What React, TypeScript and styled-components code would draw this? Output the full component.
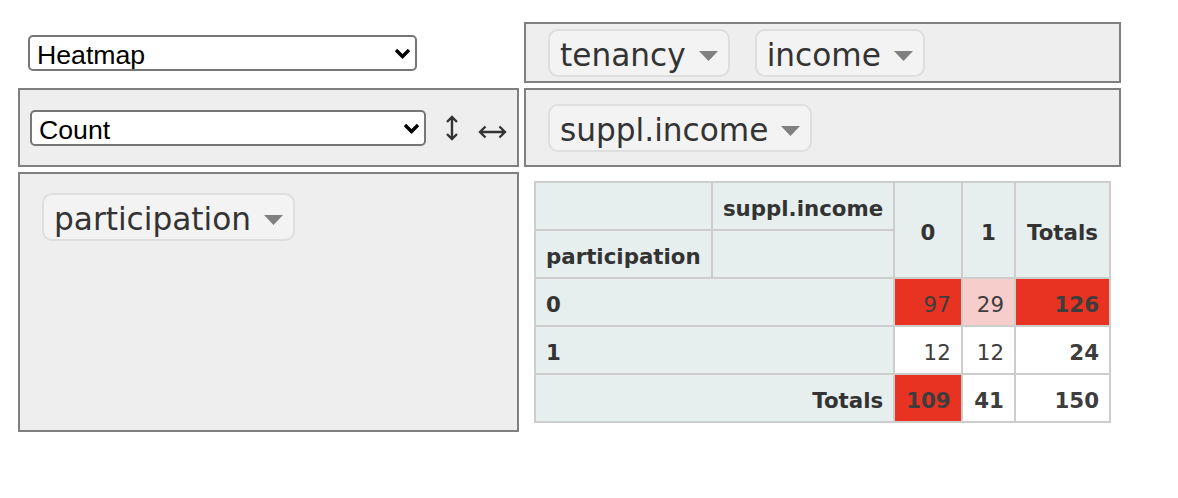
import React from "react";
import styled, { createGlobalStyle } from "styled-components";

const GlobalStyle = createGlobalStyle`
  html, body {
    margin: 0;
    padding: 0;
    background: #ffffff;
  }
  body {
    font-family: "DejaVu Sans", Verdana, sans-serif;
    color: #333333;
  }
`;

const Layout = styled.div`
  display: grid;
  grid-template-columns: 501px 597px;
  grid-template-rows: 61px 79px 260px;
  column-gap: 5px;
  row-gap: 5px;
  padding: 22px 0 0 18px;
`;

const RendererCell = styled.div`
  display: flex;
  align-items: center;
  padding: 0 10px;
`;

const AxisBox = styled.div<{ $top?: boolean }>`
  box-sizing: border-box;
  border: 2px solid #808080;
  background: #eeeeee;
  display: flex;
  align-items: ${(p) => (p.$top ? "flex-start" : "center")};
  gap: 25px;
  padding: ${(p) => (p.$top ? "19px 22px" : "0 22px")};
`;

const ValsBox = styled(AxisBox)`
  gap: 0;
  padding: 0 10px;
`;

const TableCell = styled.div`
  padding: 9px 10px;
`;

const SelectWrap = styled.div<{ $width: number }>`
  position: relative;
  width: ${(p) => p.$width}px;
  height: 36px;
`;

const Select = styled.select`
  appearance: none;
  box-sizing: border-box;
  width: 100%;
  height: 100%;
  border: 2px solid #767676;
  border-radius: 5px;
  background: #ffffff;
  color: #000000;
  font-family: "Liberation Sans", Arial, sans-serif;
  font-size: 26.67px;
  padding: 3px 30px 0 7px;
  outline: none;
`;

const Chevron = styled.svg`
  position: absolute;
  right: 6px;
  top: 13px;
  pointer-events: none;
`;

const OrderArrow = styled.svg<{ $gap: number }>`
  display: block;
  margin-left: ${(p) => p.$gap}px;
  color: #333333;
`;

const Chip = styled.span`
  display: inline-flex;
  align-items: center;
  box-sizing: border-box;
  height: 48px;
  border: 2px solid #dedede;
  border-radius: 10px;
  background: #f3f3f3;
  padding: 4px 10px 0;
  font-size: 31.2px;
  color: #333333;
  white-space: nowrap;
`;

const Triangle = styled.svg`
  margin-left: 13px;
  margin-top: 2px;
`;

const PivotTable = styled.table`
  border-collapse: collapse;
  font-family: "DejaVu Sans", Verdana, sans-serif;
  font-size: 21.33px;
  line-height: 26px;
  border: 2px solid #cdcdcd;
`;

const Th = styled.th<{ $align?: "left" | "center" | "right"; $w?: number }>`
  background: #e6eeee;
  border: 2px solid #cdcdcd;
  padding: 13px 10px 7px;
  font-weight: bold;
  color: #333333;
  text-align: ${(p) => p.$align ?? "left"};
  vertical-align: middle;
  white-space: nowrap;
  ${(p) => (p.$w ? `width: ${p.$w}px;` : "")}
`;

const Td = styled.td<{ $bg?: string; $bold?: boolean }>`
  background: ${(p) => p.$bg ?? "#ffffff"};
  border: 2px solid #cdcdcd;
  padding: 13px 10px 7px;
  text-align: right;
  color: #3d3d3d;
  font-weight: ${(p) => (p.$bold ? "bold" : "normal")};
  white-space: nowrap;
`;

const RED = "#e83323";
const PINK = "#f7cdcb";

function Dropdown({ value, width }: { value: string; width: number }) {
  return (
    <SelectWrap $width={width}>
      <Select defaultValue={value}>
        <option>{value}</option>
      </Select>
      <Chevron width="17" height="11" viewBox="0 0 17 11">
        <path d="M2 2 L8.5 8.5 L15 2" fill="none" stroke="#000" strokeWidth="3.4" />
      </Chevron>
    </SelectWrap>
  );
}

function Attr({ name }: { name: string }) {
  return (
    <Chip>
      {name}
      <Triangle width="19" height="10" viewBox="0 0 19 10">
        <path d="M0 0 L19 0 L9.5 10 Z" fill="#808080" />
      </Triangle>
    </Chip>
  );
}

export default function App() {
  return (
    <>
      <GlobalStyle />
      <Layout>
        <RendererCell>
          <Dropdown value="Heatmap" width={389} />
        </RendererCell>
        <AxisBox>
          <Attr name="tenancy" />
          <Attr name="income" />
        </AxisBox>
        <ValsBox>
          <Dropdown value="Count" width={397} />
          <OrderArrow $gap={19} width="14" height="36" viewBox="0 0 14 36">
            <path
              d="M7 7 V29 M2 12 L7 7 L12 12 M2 24 L7 29 L12 24"
              fill="none"
              stroke="currentColor"
              strokeWidth="2.4"
            />
          </OrderArrow>
          <OrderArrow $gap={19} width="29" height="36" viewBox="0 0 29 36">
            <path
              d="M2 22 H27 M7.5 16.5 L2 22 L7.5 27.5 M21.5 16.5 L27 22 L21.5 27.5"
              fill="none"
              stroke="currentColor"
              strokeWidth="2.4"
            />
          </OrderArrow>
        </ValsBox>
        <AxisBox>
          <Attr name="suppl.income" />
        </AxisBox>
        <AxisBox $top>
          <Attr name="participation" />
        </AxisBox>
        <TableCell>
          <PivotTable>
            <thead>
              <tr>
                <Th $w={155} />
                <Th $w={160}>suppl.income</Th>
                <Th $align="center" $w={46} rowSpan={2}>0</Th>
                <Th $align="center" $w={32} rowSpan={2}>1</Th>
                <Th $align="center" $w={74} rowSpan={2}>Totals</Th>
              </tr>
              <tr>
                <Th>participation</Th>
                <Th />
              </tr>
            </thead>
            <tbody>
              <tr>
                <Th colSpan={2}>0</Th>
                <Td $bg={RED}>97</Td>
                <Td $bg={PINK}>29</Td>
                <Td $bg={RED} $bold>126</Td>
              </tr>
              <tr>
                <Th colSpan={2}>1</Th>
                <Td>12</Td>
                <Td>12</Td>
                <Td $bold>24</Td>
              </tr>
              <tr>
                <Th colSpan={2} $align="right">Totals</Th>
                <Td $bg={RED} $bold>109</Td>
                <Td $bold>41</Td>
                <Td $bold>150</Td>
              </tr>
            </tbody>
          </PivotTable>
        </TableCell>
      </Layout>
    </>
  );
}
